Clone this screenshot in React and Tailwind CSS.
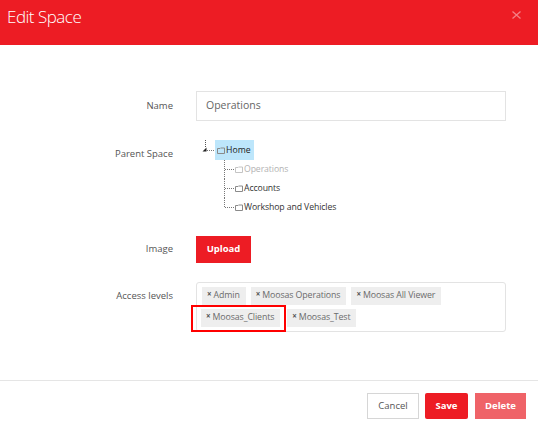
import React from "react";

function Folder({ color = "#8a8a8a" }) {
  return (
    <svg width="8" height="7" viewBox="0 0 8 7" className="shrink-0">
      <path d="M0.5 1.5 H3 L3.5 1 H7.5 V6.5 H0.5 Z" fill="none" stroke={color} strokeWidth="1" />
    </svg>
  );
}

function ChildRow({ label, last, muted }) {
  return (
    <div className="flex h-[19px] items-center">
      <svg width="11" height="19" viewBox="0 0 11 19" className="shrink-0">
        <line x1="0.5" y1="0" x2="0.5" y2={last ? 10 : 19} stroke="#777" strokeDasharray="1 1" />
        <line x1="1" y1="9.5" x2="11" y2="9.5" stroke="#777" strokeDasharray="1 1" />
      </svg>
      <Folder color={muted ? "#c4c4c4" : "#8a8a8a"} />
      <span className={`ml-[1px] text-[8.7px] leading-none tracking-[-0.1px] ${muted ? "text-[#b3b3b3]" : "text-[#333]"}`}>{label}</span>
    </div>
  );
}

function Tag({ label }) {
  return (
    <span className="flex h-[18px] items-center bg-[#eeeeee] pl-[5px] pr-[6px] text-[8.8px] tracking-[-0.1px] text-[#6b6b6b]">
      <span className="mr-[2px] -mt-[5px] text-[8px] font-bold leading-none text-[#555]">×</span>
      {label}
    </span>
  );
}

export default function App() {
  return (
    <div className="flex h-[429px] w-[538px] flex-col bg-white font-['Open_Sans',sans-serif]">
      <div className="flex h-[45px] shrink-0 items-start justify-between bg-[#ed1c24] pl-[7px] pr-[17px]">
        <span className="mt-[4px] text-[17px] font-light leading-[26px] tracking-[-0.5px] text-white">Edit Space</span>
        <svg width="9" height="8" viewBox="0 0 9 8" className="mt-[11px]">
          <path d="M0.5 0.5 L8.5 7.5 M8.5 0.5 L0.5 7.5" stroke="#f47f86" strokeWidth="1.3" />
        </svg>
      </div>

      <div className="flex flex-1 flex-col gap-[19px] pt-[46px]">
        <div className="flex items-center">
          <div className="w-[173px] text-right text-[9.5px] text-[#555]">Name</div>
          <div className="ml-[23px] flex h-[30px] w-[310px] items-center border border-[#e3e3e3] px-[9px] text-[10.5px] text-[#666]">
            Operations
          </div>
        </div>

        <div className="flex items-start">
          <div className="w-[173px] pt-[7px] text-right text-[9.5px] leading-[14px] text-[#555]">Parent Space</div>
          <div className="ml-[23px] flex flex-col">
            <div className="flex h-[20px] items-center">
              <svg width="19" height="20" viewBox="0 0 19 20" className="shrink-0">
                <line x1="9.5" y1="0" x2="9.5" y2="8" stroke="#555" strokeDasharray="1 1" />
                <polygon points="6.5,11.5 10.5,7.5 10.5,11.5" fill="#222" />
                <line x1="11" y1="10.5" x2="19" y2="10.5" stroke="#777" strokeDasharray="1 1" />
              </svg>
              <div className="flex h-[20px] items-center bg-[#bde6fb] pl-[2px] pr-[3px]">
                <Folder />
                <span className="ml-[1px] text-[8.7px] leading-none text-[#222]">Home</span>
              </div>
            </div>
            <div className="ml-[28px] flex flex-col">
              <ChildRow label="Operations" muted />
              <ChildRow label="Accounts" />
              <ChildRow label="Workshop and Vehicles" last />
            </div>
          </div>
        </div>

        <div className="flex items-center">
          <div className="w-[173px] text-right text-[9.5px] text-[#555]">Image</div>
          <div className="ml-[23px] flex h-[27px] w-[55px] items-center justify-center bg-[#ed1c24] text-[9.5px] font-bold text-white">
            Upload
          </div>
        </div>

        <div className="flex items-start">
          <div className="w-[173px] pt-[7px] text-right text-[9.5px] leading-[14px] text-[#555]">Access levels</div>
          <div className="ml-[23px] flex w-[310px] flex-wrap gap-x-[5px] gap-y-[4px] rounded-[3px] border border-[#e3e3e3] pb-[4px] pl-[5px] pt-[4px]">
            <Tag label="Admin" />
            <Tag label="Moosas Operations" />
            <Tag label="Moosas All Viewer" />
            <span className="relative -ml-[1px] mr-[2px] flex">
              <Tag label="Moosas_Clients" />
              <span className="pointer-events-none absolute -bottom-[5px] -left-[10px] -right-[6px] -top-[4px] border-2 border-[#ff0000]" />
            </span>
            <Tag label="Moosas_Test" />
          </div>
        </div>
      </div>

      <div className="flex h-[49px] shrink-0 items-start justify-end gap-[6px] border-t border-[#e5e5e5] pr-[12px] pt-[12px]">
        <div className="flex h-[26px] w-[52px] items-center justify-center border border-[#d6d6d6] bg-white text-[9.5px] text-[#555]">
          Cancel
        </div>
        <div className="flex h-[26px] w-[43px] items-center justify-center rounded-[2px] bg-[#ed1c24] text-[9.5px] font-bold text-white">
          Save
        </div>
        <div className="ml-[1px] flex h-[26px] w-[51px] items-center justify-center bg-[#ef6368] text-[9.5px] font-bold text-white">
          Delete
        </div>
      </div>
    </div>
  );
}
